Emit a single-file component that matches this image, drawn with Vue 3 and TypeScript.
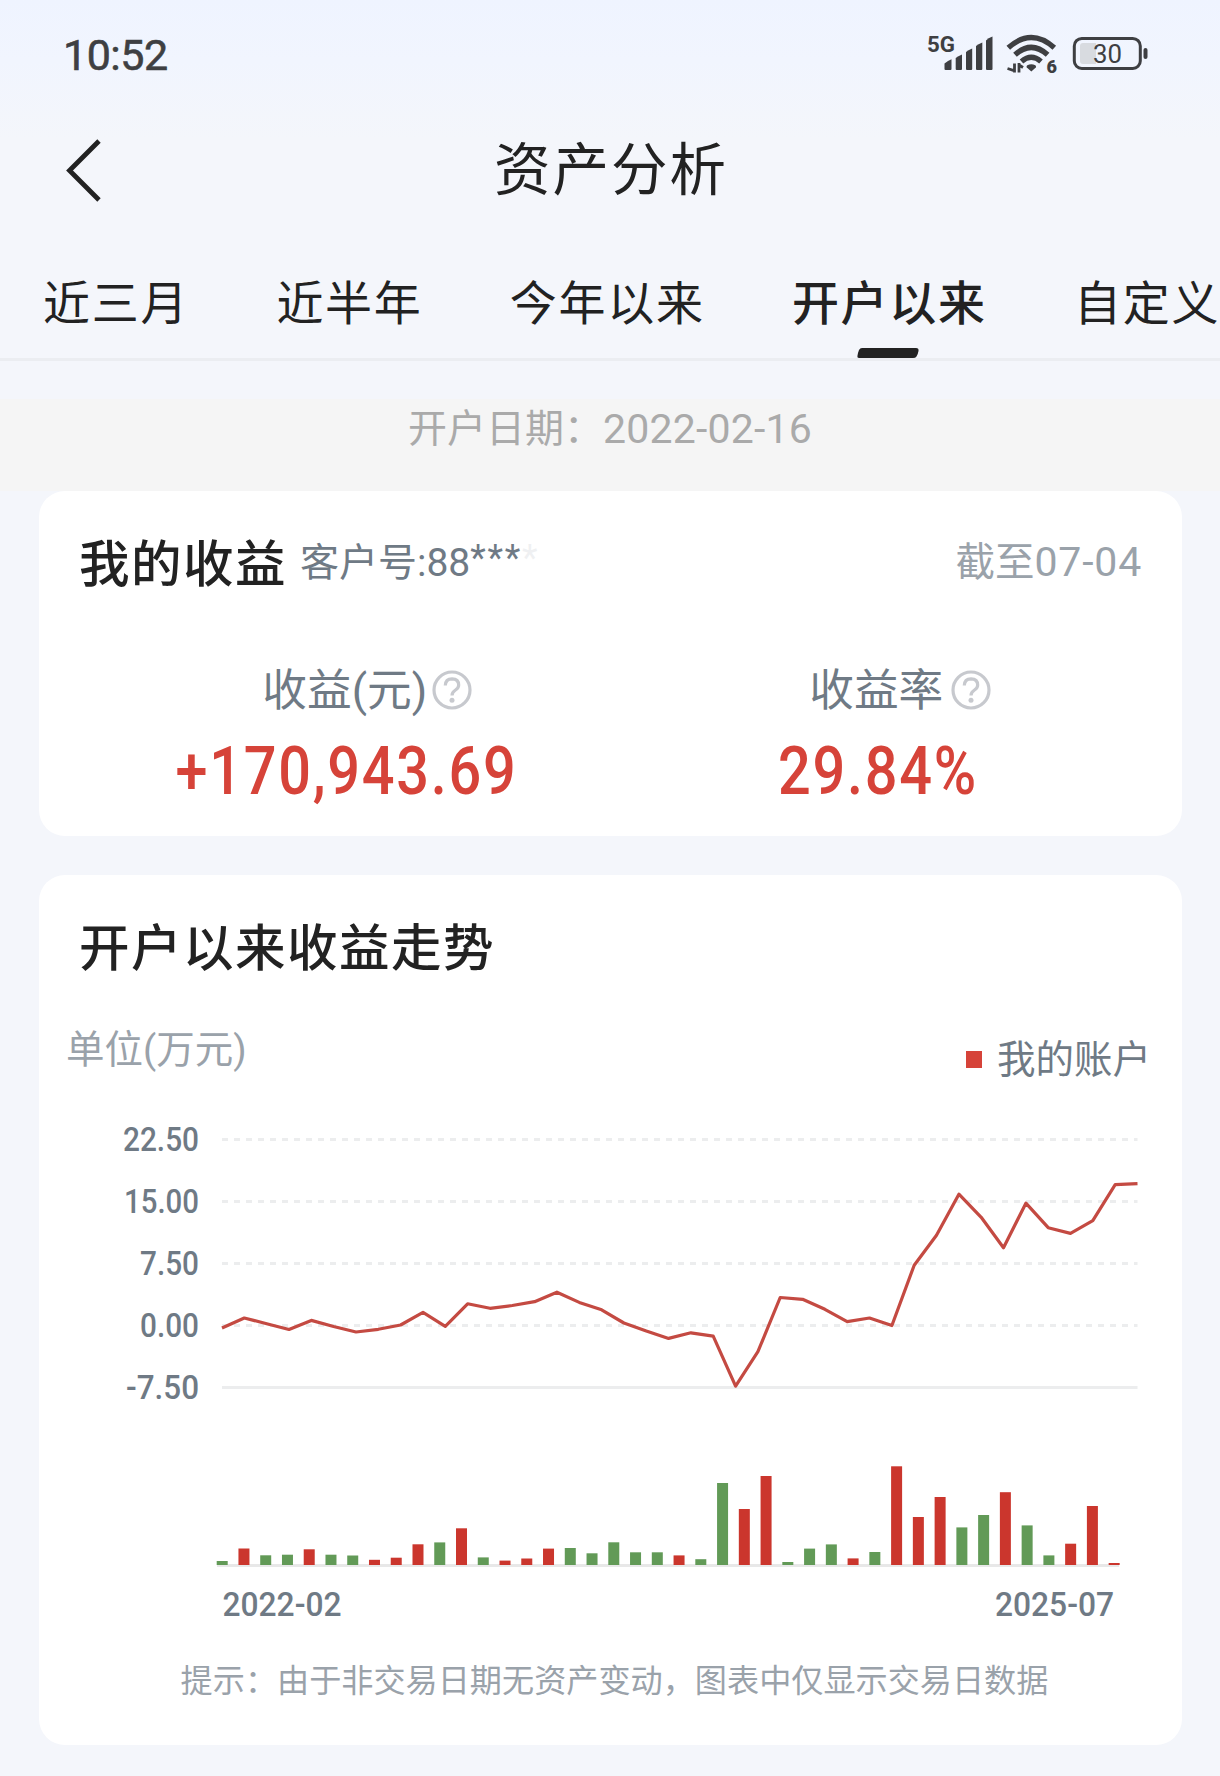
<script setup lang="ts">
interface Tab {
  label: string
  active?: boolean
}

const tabs: Tab[] = [
  { label: '近三月' },
  { label: '近半年' },
  { label: '今年以来' },
  { label: '开户以来', active: true },
  { label: '自定义' },
]

interface Metric {
  label: string
  value: string
}

const metrics: Metric[] = [
  { label: '收益(元)', value: '+170,943.69' },
  { label: '收益率', value: '29.84%' },
]

/* Chart space: 1143 wide, the plot runs from x = 183 to x = 1098. */
const plotLeft = 183
const plotRight = 1098.5

const ticks = [
  { label: '22.50', y: 59.5, width: 76 },
  { label: '15.00', y: 121.5, width: 75 },
  { label: '7.50', y: 183.5, width: 59 },
  { label: '0.00', y: 245.5, width: 59 },
  { label: '-7.50', y: 307.5, width: 73 },
]

const lineY: number[] = [
  248, 238, 243.7, 249.5, 240.4, 246.5, 252, 249.3, 245, 232.4, 246.3, 223.8, 228.3, 225.5,
  221.7, 212.2, 222.4, 229.8, 243, 251, 258.4, 252.8, 256.2, 306.2, 271.7, 217.5, 219.3, 229.3,
  241.6, 238, 245.5, 185.2, 155.3, 114.2, 137.3, 167.8, 123.2, 147.7, 153.4, 140.7, 104.7, 103.7,
]

const step = (plotRight - plotLeft) / (lineY.length - 1)
const linePoints = lineY.map((y, i) => `${(plotLeft + i * step).toFixed(1)},${y}`).join(' ')

type Bar = [kind: 'u' | 'd', height: number]

const bars: Bar[] = [
  ['d', 4], ['u', 16.5], ['d', 9.7], ['d', 10.3], ['u', 15.7], ['d', 10.3], ['d', 9.5],
  ['u', 5.2], ['u', 7.3], ['u', 20.7], ['d', 22.6], ['u', 36.7], ['d', 7.6], ['u', 4.4],
  ['u', 6.5], ['u', 16.4], ['d', 17], ['d', 11.7], ['d', 22.7], ['d', 12.7], ['d', 12.7],
  ['u', 9.6], ['d', 5.8], ['d', 82], ['u', 56], ['u', 89], ['d', 3], ['d', 16.4],
  ['d', 20.6], ['u', 6.6], ['d', 13], ['u', 98.7], ['u', 48], ['u', 68], ['d', 37.6],
  ['d', 50], ['u', 72.8], ['d', 39.6], ['d', 9.6], ['u', 21.3], ['u', 59], ['u', 2],
]
const barBase = 485
</script>

<template>
  <div class="page">
    <header class="status">
      <span class="clock">10:52</span>
      <svg class="status-icons" width="230" height="60" viewBox="0 0 230 60">
        <g class="ink">
          <text class="net" x="7" y="26.500" textLength="28" lengthAdjust="spacingAndGlyphs">5G</text>
          <path d="M24.5 44V38.5Q28 35.5 31.5 34.2V44Q31.5 45 30.5 45H25.5Q24.5 45 24.5 44Z" />
          <path d="M35.7 44V33Q38 31 42 29.5V44Q42 45 41 45H36.7Q35.7 45 35.7 44Z" />
          <path d="M46 44V27Q48 25 52.2 23.5V44Q52.2 45 51.2 45H47Q46 45 46 44Z" />
          <path d="M56 44V21Q58 19 62.3 17.5V44Q62.3 45 61.3 45H57Q56 45 56 44Z" />
          <path d="M66 44V15.5Q68 13 72.5 11.5V44Q72.5 45 71.5 45H67Q66 45 66 44Z" />
          <path d="M111.3 46.5L106.8 42.5Q106 41.2 107.3 40.3Q111.3 38.4 115.3 40.3Q116.6 41.2 115.8 42.5Z" />
          <text class="gen" x="126.500" y="47.500" textLength="10.500" lengthAdjust="spacingAndGlyphs">6</text>
          <rect x="223.500" y="23" width="4" height="11" rx="2" />
        </g>
        <g class="arc">
          <path d="M88.3 22.800Q111.3 2.300 134.3 22.800" />
          <path d="M95 29.800Q111.3 15 127.6 29.800" />
          <path d="M101.5 36.500Q111.3 28 121 36.500" />
        </g>
        <path class="arrows" d="M94.500 38.500V47.500M94.800 45.800L87.500 43.500M99 47.500V38M98.700 39.800L103 42.500" />
        <rect class="shell" x="154.300" y="13.400" width="66" height="30" rx="7.500" />
        <path class="level" d="M163 18H176V39H163Q160 39 160 36V21Q160 18 163 18Z" />
        <text class="pct" x="173" y="37.700" textLength="29" lengthAdjust="spacingAndGlyphs">30</text>
      </svg>
    </header>

    <nav class="nav">
      <svg class="back" width="36" height="64" viewBox="0 0 36 64">
        <path d="M34 2L4.500 31.500L34 61" />
      </svg>
      <h1>资产分析</h1>
    </nav>

    <div class="tabs">
      <div v-for="t in tabs" :key="t.label" class="tab" :class="{ active: t.active }">
        {{ t.label }}
        <svg v-if="t.active" class="mark" width="62" height="10" viewBox="0 0 62 10">
          <path d="M5 0H59Q62 0 61.500 3Q61 6 59.500 8.500Q58.500 10 56 10H2Q0 10 .500 7.500Q1 4.500 2 2Q3 0 5 0Z" />
        </svg>
      </div>
    </div>

    <div class="opened">
      <span>开户日期：</span><span class="opened-date">2022-02-16</span>
    </div>

    <section class="card income">
      <div class="income-head">
        <h2>我的收益</h2>
        <span class="client">客户号:88<span class="stars">***<i>*</i></span></span>
        <span class="until">截至<b>07-04</b></span>
      </div>
      <div class="metrics">
        <div v-for="m in metrics" :key="m.label" class="metric">
          <div class="metric-label">
            <span>{{ m.label }}</span>
            <svg class="help" width="40" height="40" viewBox="0 0 40 40">
              <circle cx="20" cy="20" r="18" />
              <path d="M13.300 15.500Q13.500 8.800 20 8.800Q26.700 9 26.700 15Q26.700 18 23.500 20Q20 22.200 20 25.500" />
              <circle class="dot" cx="20" cy="30.300" r="2.500" />
            </svg>
          </div>
          <div class="metric-value"><span>{{ m.value }}</span></div>
        </div>
      </div>
    </section>

    <section class="card trend">
      <h2>开户以来收益走势</h2>
      <div class="meta">
        <span class="unit">单位(万元)</span>
        <span class="legend"><i></i><span>我的账户</span></span>
      </div>
      <svg class="chart" width="1143" height="560" viewBox="0 0 1143 560">
        <g v-for="(t, i) in ticks" :key="t.label">
          <line
            class="grid"
            :class="{ solid: i === ticks.length - 1 }"
            :x1="plotLeft"
            :x2="plotRight"
            :y1="t.y"
            :y2="t.y"
          />
          <text class="axis" :x="160 - t.width" :y="t.y + 11" :textLength="t.width" lengthAdjust="spacingAndGlyphs">{{ t.label }}</text>
        </g>
        <polyline class="line" :points="linePoints" />
        <line class="base" x1="178" x2="1080" y1="485.500" y2="485.500" />
        <rect
          v-for="(b, i) in bars"
          :key="i"
          :class="b[0] === 'u' ? 'up' : 'down'"
          :x="177.700 + i * 21.755"
          :y="barBase - b[1]"
          width="11"
          :height="b[1]"
        />
        <text class="axis" x="183.500" y="536" textLength="119" lengthAdjust="spacingAndGlyphs">2022-02</text>
        <text class="axis" x="956" y="536" textLength="119" lengthAdjust="spacingAndGlyphs">2025-07</text>
      </svg>
      <p class="tip">提示：由于非交易日期无资产变动，图表中仅显示交易日数据</p>
    </section>
  </div>
</template>

<style>
body {
  margin: 0;
  background: #f4f6fb;
}
</style>

<style scoped>
.page {
  width: 1220px;
  height: 1776px;
  overflow: hidden;
  background: linear-gradient(#eff4ff 0, #f1f5fe 60px, #f4f6fb 140px);
  color: #222;
  font-family: Roboto, 'Noto Sans CJK SC', sans-serif;
}
h1,
h2,
p {
  margin: 0;
}
.status {
  display: flex;
  justify-content: space-between;
  align-items: center;
  height: 107px;
  padding: 0 70px 0 63px;
}
.clock {
  padding-top: 2px;
  color: #3e3f42;
  font-size: 43px;
  letter-spacing: -0.5px;
  -webkit-text-stroke: 0.6px #3e3f42;
}
.status-icons {
  margin-top: 3px;
}
.ink {
  fill: #3e3f42;
}
.net {
  font: 700 22px Roboto, sans-serif;
}
.gen {
  font: 900 18px Roboto, sans-serif;
}
.pct {
  font: 400 26px Roboto, sans-serif;
  fill: #3e3f42;
}
.arc,
.arrows,
.shell {
  fill: none;
  stroke: #3e3f42;
}
.arc {
  stroke-width: 5.4;
}
.arrows {
  stroke-width: 2.8;
}
.shell {
  stroke-width: 3;
}
.level {
  fill: #d8dbe0;
}
.nav {
  display: grid;
  grid-template-columns: 150px 1fr 150px;
  align-items: center;
  height: 127px;
}
.back {
  margin-left: 65px;
  fill: none;
  stroke: #222;
  stroke-width: 4.8;
}
h1 {
  padding-left: 2px;
  text-align: center;
  font-size: 56.5px;
  font-weight: 400;
  letter-spacing: 2px;
  line-height: 80px;
}
.tabs {
  display: flex;
  gap: 87.3px;
  height: 124px;
  padding-left: 43px;
  border-bottom: 3px solid #ebedf1;
}
.tab {
  position: relative;
  flex: none;
  padding-top: 40px;
  font-size: 47px;
  line-height: 60px;
  letter-spacing: 1.7px;
}
.tab.active {
  font-weight: 500;
}
.mark {
  position: absolute;
  left: 50%;
  bottom: 0;
  margin-left: -32px;
  fill: #222;
}
.opened {
  display: flex;
  justify-content: center;
  height: 92px;
  margin-top: 38px;
  background: #f5f5f5;
  color: #aaa;
  font-size: 39px;
  line-height: 61px;
}
.opened-date {
  font-size: 41px;
  letter-spacing: 0.2px;
}
.card {
  width: 1143px;
  margin-left: 39px;
  box-sizing: border-box;
  border-radius: 26px;
  background: #fff;
  overflow: hidden;
}
h2 {
  font-size: 50.5px;
  font-weight: 500;
  letter-spacing: 1.5px;
}
.income {
  height: 345px;
  padding: 43px 40px 0;
}
.income-head {
  display: flex;
  height: 60px;
  line-height: 61px;
}
.client {
  margin-left: 13px;
  color: #6f7a85;
  font-size: 39px;
  line-height: 58px;
}
.stars {
  position: relative;
  top: -6px;
  font-size: 36px;
  letter-spacing: 1.7px;
}
.stars i {
  font-style: normal;
  opacity: 0.1;
}
.until {
  margin-left: auto;
  color: #9aa2aa;
  font-size: 39.5px;
  line-height: 57px;
}
.until b {
  font-size: 41px;
  font-weight: 400;
  letter-spacing: 0.8px;
}
.metrics {
  display: flex;
  margin-top: 66px;
}
.metric {
  display: flex;
  flex-direction: column;
  align-items: center;
  flex: 1;
}
.metric-label {
  position: relative;
  color: #6f7a85;
  font-size: 44.7px;
  line-height: 62px;
  height: 61px;
}
.help {
  position: absolute;
  left: 100%;
  top: 9.5px;
  margin-left: 6.5px;
  fill: none;
  stroke: #c7c9ce;
  stroke-width: 3.2;
}
.metric:first-child .help {
  margin-left: 5px;
}
.metric:last-child .help {
  margin-left: 8px;
}
.help .dot {
  fill: #c7c9ce;
  stroke: none;
}
.metric-value {
  color: #d64339;
  font-size: 67px;
  font-weight: 500;
  line-height: 101px;
}
.metric-value span {
  display: inline-block;
  padding-left: 3px;
  letter-spacing: 2px;
  transform: scaleX(0.86);
}
.trend {
  height: 870px;
  margin-top: 39px;
  padding-top: 42px;
}
.trend h2 {
  height: 60px;
  padding-left: 40px;
  line-height: 63px;
}
.meta {
  display: flex;
  justify-content: space-between;
  height: 103px;
  padding: 42px 31px 0 27px;
  box-sizing: border-box;
  font-size: 38.5px;
}
.unit {
  color: #9aa2aa;
  line-height: 62px;
}
.legend {
  display: flex;
  align-items: center;
  color: #6f7a85;
  height: 61px;
  margin-top: 10px;
}
.legend span {
  line-height: 58px;
}
.legend i {
  width: 16px;
  height: 17px;
  margin-right: 15px;
  background: #d64339;
}
.chart {
  display: block;
  margin-bottom: -2px;
}
.grid {
  stroke: #ecedee;
  stroke-width: 3;
  stroke-dasharray: 6 6;
}
.grid.solid {
  stroke-dasharray: none;
}
.axis {
  fill: #6f7a85;
  font: 500 32.5px Roboto, sans-serif;
}
.line {
  fill: none;
  stroke: #c44a42;
  stroke-width: 3.2;
  stroke-linejoin: round;
}
.base {
  stroke: #e8e8e8;
  stroke-width: 3;
}
.up {
  fill: #cb362d;
}
.down {
  fill: #629a57;
}
.tip {
  margin-top: 19px;
  padding-left: 8px;
  color: #9aa2aa;
  font-size: 32.15px;
  line-height: 48px;
  text-align: center;
}
</style>
